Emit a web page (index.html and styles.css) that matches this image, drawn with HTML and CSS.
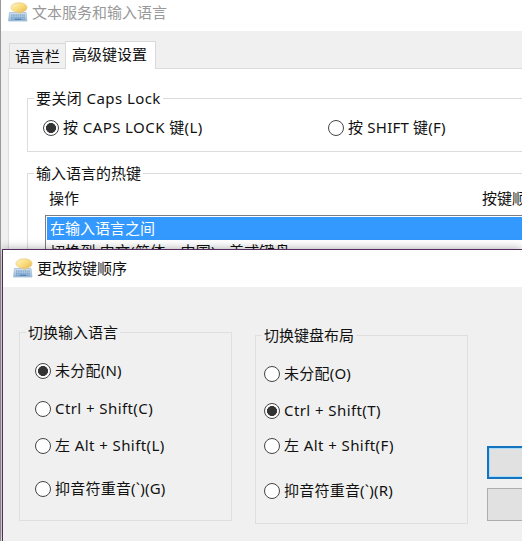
FILE: index.html
```
<!DOCTYPE html>
<html lang="zh-CN">
<head>
<meta charset="utf-8">
<title>文本服务和输入语言</title>
<link rel="stylesheet" href="styles.css">
</head>
<body>
<svg width="0" height="0" class="defs" aria-hidden="true">
  <defs>
    <linearGradient id="gold" x1="0" y1="0" x2="1" y2="1"><stop offset="0" stop-color="#fff6cc"/><stop offset=".5" stop-color="#fadb78"/><stop offset="1" stop-color="#dfae50"/></linearGradient>
    <linearGradient id="keys" x1="0" y1="0" x2="0" y2="1"><stop offset="0" stop-color="#d5e4ef"/><stop offset="1" stop-color="#8fb4d8"/></linearGradient>
    <symbol id="ime" viewBox="0 0 20 20">
      <path d="M1.500 10.500h16.500l1 8.500H.5z" fill="url(#keys)" stroke="#a3bdd2" stroke-width=".8"/>
      <path d="M3 13h14M3 15.200h14M3 17.200h3M14 17.200h3" stroke="#6694c2" stroke-width="1" stroke-dasharray="1.6 .6"/>
      <path d="M6.500 17.200h7" stroke="#4777aa" stroke-width="1.200"/>
      <path d="M11 .8c4.600 0 8 1.900 8 4.600 0 2.400-2 4-5.200 4.600l-2.300 2-.5-1.800C6.400 10.200 3 8.400 3 5.600 3 2.800 6.400.8 11 .8z" fill="url(#gold)" stroke="#e2c377" stroke-width=".6"/>
    </symbol>
  </defs>
</svg>
<main class="window">
  <header class="titlebar"><svg class="icon"><use href="#ime"/></svg><span>文本服务和输入语言</span></header>
  <nav class="tabs"><span class="tab">语言栏</span><span class="tab active">高级键设置</span></nav>
  <div class="panel">
    <fieldset class="group caps">
      <legend class="wide">要关闭 Caps Lock</legend>
      <div class="choices">
        <label class="radio"><i class="dot on"></i><span class="wide">按 CAPS LOCK 键(L)</span></label>
        <label class="radio"><i class="dot"></i><span class="soft">按 SHIFT 键(F)</span></label>
      </div>
    </fieldset>
    <fieldset class="group hotkeys">
      <legend>输入语言的热键</legend>
      <div class="columns"><span>操作</span><span>按键顺序</span></div>
      <div class="list">
        <div class="row selected">在输入语言之间</div>
        <div class="row soft">切换到 中文(简体，中国) - 美式键盘</div>
      </div>
    </fieldset>
  </div>
</main>
<section class="dialog">
  <header class="dialog-title"><svg class="icon"><use href="#ime"/></svg><span>更改按键顺序</span></header>
  <div class="dialog-body">
    <fieldset class="group switch left">
      <legend>切换输入语言</legend>
      <label class="radio"><i class="dot on"></i><span class="soft">未分配(N)</span></label>
      <label class="radio"><i class="dot"></i><span class="wide">Ctrl + Shift(C)</span></label>
      <label class="radio"><i class="dot"></i><span class="wide">左 Alt + Shift(L)</span></label>
      <label class="radio"><i class="dot"></i><span class="soft">抑音符重音(`)(G)</span></label>
    </fieldset>
    <fieldset class="group switch right">
      <legend>切换键盘布局</legend>
      <label class="radio"><i class="dot"></i><span class="soft">未分配(O)</span></label>
      <label class="radio"><i class="dot on"></i><span class="wide">Ctrl + Shift(T)</span></label>
      <label class="radio"><i class="dot"></i><span class="wide">左 Alt + Shift(F)</span></label>
      <label class="radio"><i class="dot"></i><span class="soft">抑音符重音(`)(R)</span></label>
    </fieldset>
    <div class="buttons"><button class="primary"></button><button></button></div>
  </div>
</section>
</body>
</html>
```
FILE: styles.css
```
* { box-sizing: border-box; }
html { height: 541px; overflow: hidden; }
body {
  margin: 0;
  width: 522px;
  height: 541px;
  overflow: hidden;
  position: relative;
  background: #f0f0f0;
  color: #111;
  font: 15px/21px "Noto Sans", "Noto Sans CJK SC", sans-serif;
  white-space: nowrap;
}
.defs { position: absolute; }
.wide { letter-spacing: .42px; }
.soft { letter-spacing: .22px; }
.window {
  height: 541px;
  border-left: 1px solid #999;
  overflow: hidden;
}
.titlebar {
  display: flex;
  gap: 4px;
  height: 31px;
  padding: 2px 0 0 7px;
  background: #fff;
  color: #999;
}
.icon { width: 20px; height: 20px; flex: none; }
.tabs {
  display: flex;
  align-items: flex-end;
  height: 38px;
  padding-left: 8px;
  position: relative;
}
.tab {
  width: 56px;
  height: 26px;
  padding: 2px 0 0 5px;
  border: 1px solid #d9d9d9;
  border-right: 0;
}
.tab.active {
  width: 91px;
  height: 28px;
  padding: 2px 0 0 6px;
  background: #fff;
  border-right: 1px solid #d9d9d9;
  border-bottom: 0;
}
.panel {
  height: 480px;
  margin: -1px 0 0 7px;
  padding: 19px 0 0 18px;
  background: #fff;
  border: solid #dcdcdc;
  border-width: 1px 0 0 1px;
}
.group {
  margin: 0;
  padding: 0;
  border: 1px solid #dcdcdc;
  min-width: 0;
}
.group legend { margin-left: 6px; padding: 0 2px; }
.caps { height: 64px; margin-right: -4px; }
.choices {
  display: grid;
  grid-template-columns: 285px 1fr;
  padding: 8px 0 0 15px;
}
.radio { display: flex; align-items: center; gap: 4px; height: 21px; }
.dot {
  width: 16px;
  height: 16px;
  flex: none;
  border: 1px solid #444;
  border-radius: 50%;
  background: #fff;
}
.dot.on { background: radial-gradient(circle, #333 0 4.700px, #fff 5.300px); }
.hotkeys { height: 300px; margin: 11px -4px 0 0; }
.columns {
  display: grid;
  grid-template-columns: 433px 1fr;
  padding: 4px 0 0 21px;
}
.list {
  height: 120px;
  margin: 6px 0 0 17px;
  border: 1px solid #7a7f85;
  padding: 1px 0 0 1px;
}
.row { height: 23px; line-height: 23px; padding-left: 3px; }
.row.selected { background: #3399ff; color: #fff; }
.dialog {
  position: absolute;
  left: 2px;
  top: 249px;
  width: 520px;
  height: 292px;
  border: solid #532b5c;
  border-width: 1px 0 0 1px;
  background: #f0f0f0;
  box-shadow: 0 0 9px rgba(0, 0, 0, .35);
  overflow: hidden;
}
.dialog-title {
  display: flex;
  gap: 4px;
  height: 37px;
  padding: 8px 0 0 10px;
  background: #fff;
}
.dialog-body {
  display: flex;
  align-items: flex-start;
  padding: 35px 0 0 16px;
}
.switch { width: 213px; height: 199px; flex: none; border-color: #dfdfdf; }
.switch .radio { padding-left: 15px; }
.switch.right { margin: 3px 0 0 23px; }
.switch.right .radio { padding-left: 8px; }
.left .radio:nth-of-type(1) { margin-top: 17px; }
.left .radio:nth-of-type(2) { margin-top: 17px; }
.left .radio:nth-of-type(3) { margin-top: 16px; }
.left .radio:nth-of-type(4) { margin-top: 22px; }
.right .radio:nth-of-type(1) { margin-top: 17px; }
.right .radio:nth-of-type(2) { margin-top: 16px; }
.right .radio:nth-of-type(3) { margin-top: 14px; }
.right .radio:nth-of-type(4) { margin-top: 24px; }
.buttons { display: grid; gap: 9px; margin: 124px 0 0 19px; flex: none; }
.buttons button {
  width: 90px;
  height: 33px;
  padding: 0;
  border: 1px solid #adadad;
  background: #e1e1e1;
}
.buttons .primary { border: 2px solid #1673bd; box-shadow: inset 0 0 0 1px #a8dcfa; }
```
